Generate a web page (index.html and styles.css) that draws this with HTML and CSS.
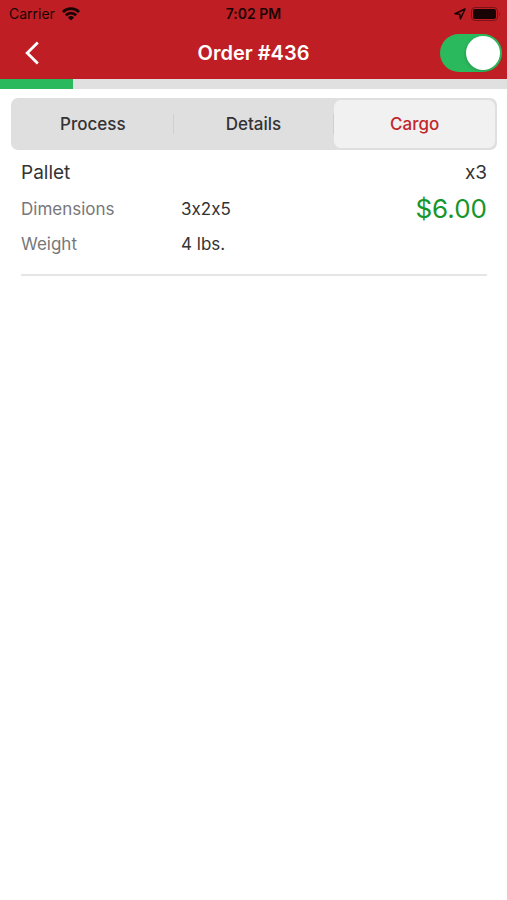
FILE: index.html
```html
<!DOCTYPE html>
<html lang="en">
<head>
<meta charset="utf-8">
<meta name="viewport" content="width=device-width, initial-scale=1">
<title>Order #436</title>
<link rel="stylesheet" href="styles.css">
</head>
<body>
<header class="header">
  <div class="status">
    <div class="carrier">
      <span>Carrier</span>
      <svg class="wifi" viewBox="0 0 18 14" aria-hidden="true">
        <g fill="none" stroke="currentColor" stroke-width="2.7">
          <path d="M.9 5C5.3 .5 12.7 .5 17.1 5"/>
          <path d="M3.8 8.3C6.6 5.4 11.4 5.4 14.2 8.3"/>
        </g>
        <path fill="currentColor" d="M5.9 10.4Q9 7.8 12.1 10.4L9 13.6Z"/>
      </svg>
    </div>
    <time class="clock">7:02 PM</time>
    <div class="indicators">
      <svg class="location" viewBox="0 0 12 12" aria-hidden="true">
        <path fill="none" stroke="currentColor" stroke-width="1.5" stroke-linejoin="round" d="M11 1L1 5.8L5.8 6.2L6.4 11Z"/>
      </svg>
      <svg class="battery" viewBox="0 0 30 14" aria-hidden="true">
        <rect x=".5" y=".5" width="26" height="13" rx="3.5" fill="none" stroke="currentColor" opacity=".4"/>
        <rect x="2" y="2" width="23" height="10" rx="2" fill="currentColor"/>
        <path d="M28 5Q29.6 7 28 9Z" fill="currentColor" opacity=".5"/>
      </svg>
    </div>
  </div>
  <nav class="navbar">
    <button class="back" type="button" aria-label="Back">
      <svg class="chevron" viewBox="0 0 14 24" aria-hidden="true">
        <path d="M12.8 1.5L2.2 12L12.8 22.5" fill="none" stroke="currentColor" stroke-width="2.8"/>
      </svg>
    </button>
    <h1 class="title">Order #436</h1>
    <input class="switch" type="checkbox" role="switch" aria-label="Order active" checked>
  </nav>
</header>
<div class="progress" role="progressbar" aria-label="Order progress" aria-valuemin="0" aria-valuemax="7" aria-valuenow="1">
  <div class="progress-fill"></div>
</div>
<main class="content">
  <div class="tabs" role="tablist">
    <button class="tab" type="button" role="tab" aria-selected="false">Process</button>
    <button class="tab" type="button" role="tab" aria-selected="false">Details</button>
    <button class="tab tab-selected" type="button" role="tab" aria-selected="true">Cargo</button>
  </div>
  <section class="item">
    <div class="item-info">
      <h2 class="item-name">Pallet</h2>
      <dl class="specs">
        <dt>Dimensions</dt><dd>3x2x5</dd>
        <dt>Weight</dt><dd>4 lbs.</dd>
      </dl>
    </div>
    <div class="item-totals">
      <span class="quantity">x3</span>
      <span class="price">$6.00</span>
    </div>
  </section>
</main>
</body>
</html>
```
FILE: styles.css
```css
* {
  box-sizing: border-box;
}

body {
  margin: 0;
  background: #fff;
  color: #333335;
  font-family: Inter, "Liberation Sans", sans-serif;
  font-size: 17px;
  font-variant-ligatures: no-contextual;
}

h1, h2, dl, dd {
  margin: 0;
}

button {
  border: 0;
  padding: 0;
  background: none;
  font: inherit;
}

.header {
  background: #bf1f24;
}

.status {
  display: grid;
  grid-template-columns: 1fr auto 1fr;
  align-items: center;
  height: 27px;
  padding: 0 9px;
  color: #180405;
  font-size: 14px;
}

.carrier, .indicators {
  display: flex;
  align-items: center;
  gap: 7px;
}

.indicators {
  justify-content: flex-end;
  gap: 5px;
}

.clock {
  font-weight: 600;
}

.wifi {
  width: 18px;
  height: 14px;
}

.location {
  width: 12px;
  height: 12px;
}

.battery {
  width: 30px;
  height: 14px;
  margin-right: -3px;
}

.navbar {
  display: grid;
  grid-template-columns: 1fr auto 1fr;
  align-items: center;
  height: 52px;
  padding: 0 5px;
  color: #fff;
}

.back {
  display: flex;
  align-items: center;
  width: 48px;
  height: 44px;
  padding-left: 20px;
  color: inherit;
}

.chevron {
  width: 14px;
  height: 24px;
}

.title {
  font-size: 20px;
  font-weight: 600;
}

.switch {
  appearance: none;
  display: flex;
  align-items: center;
  justify-self: end;
  width: 62px;
  height: 38px;
  margin: 0;
  padding: 2px;
  border-radius: 19px;
  background: #2bb95d;
}

.switch::before {
  content: "";
  width: 34px;
  height: 34px;
  margin-left: auto;
  border-radius: 50%;
  background: #fff;
  box-shadow: -1px 1px 3px rgba(0, 0, 0, 0.15);
}

.progress {
  height: 10px;
  background: #e0e0e0;
}

.progress-fill {
  width: 14.4%;
  height: 100%;
  background: #2bb95d;
}

.content {
  padding: 9px 10px 9px 11px;
}

.tabs {
  display: grid;
  grid-template-columns: repeat(3, 1fr);
  height: 52px;
  padding: 2px;
  border-radius: 7px;
  background: #dfdfdf;
}

.tab {
  display: grid;
  grid-template-columns: 1fr 1px;
  align-items: center;
  color: #333335;
  font-weight: 500;
}

.tab::after {
  content: "";
  height: 20px;
  background: #cfcfcf;
}

.tab-selected {
  display: block;
  border-radius: 7px;
  background: #f1f1f1;
  color: #c1272d;
}

.tab-selected::after {
  display: none;
}

.item {
  display: flex;
  justify-content: space-between;
  margin: 0 10px;
  padding: 4px 0 12px;
  border-bottom: 2px solid #e6e6e6;
}

.item-name, .quantity {
  font-size: 19px;
  font-weight: 400;
  line-height: 38px;
}

.specs {
  display: grid;
  grid-template-columns: 160px auto;
  line-height: 35px;
}

.specs dt {
  color: #77777a;
}

.item-totals {
  display: flex;
  flex-direction: column;
  align-items: flex-end;
}

.price {
  color: #16962a;
  font-size: 26px;
  line-height: 34px;
}
```
